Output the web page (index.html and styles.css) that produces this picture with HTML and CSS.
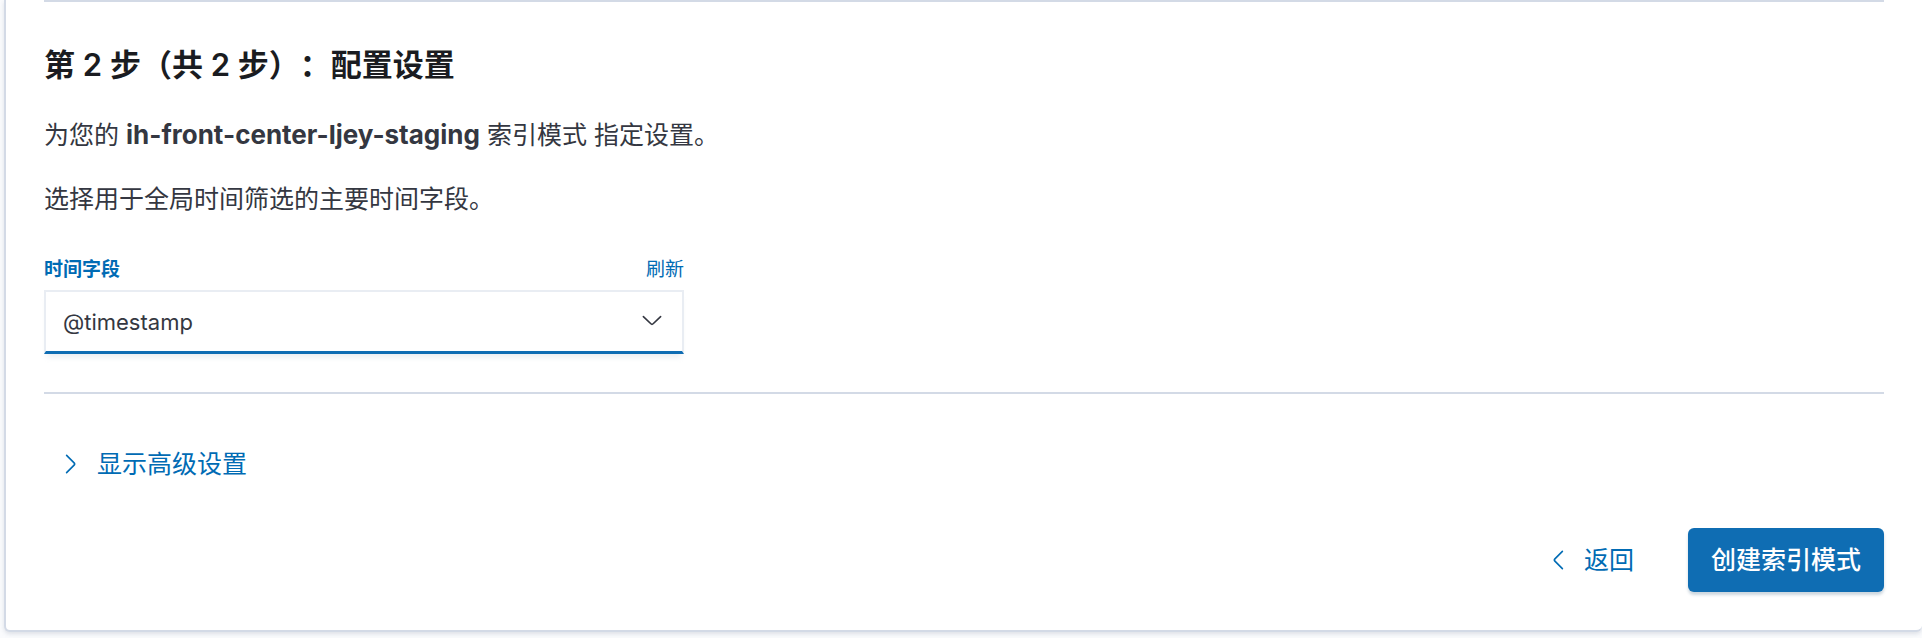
FILE: index.html
```html
<!DOCTYPE html>
<html lang="zh-CN">
<head>
<meta charset="utf-8">
<meta name="viewport" content="width=device-width, initial-scale=1">
<title>配置设置</title>
<link rel="stylesheet" href="styles.css">
</head>
<body>
<main class="panel">
  <hr class="rule">
  <h2 class="title">第 2 步（共 2 步）：配置设置</h2>
  <div class="intro">
    <p>为您的 <strong>ih-front-center-ljey-staging</strong> 索引模式 指定设置。</p>
    <p>选择用于全局时间筛选的主要时间字段。</p>
  </div>
  <div class="field">
    <div class="field-head">
      <label class="field-label" for="time-field">时间字段</label>
      <button class="refresh" type="button">刷新</button>
    </div>
    <div class="select-wrap">
      <select class="select" id="time-field">
        <option>@timestamp</option>
      </select>
      <svg class="select-arrow" width="26" height="26" viewBox="0 0 16 16" aria-hidden="true"><path d="M2.7 5.3 7.3 9.7Q8 10.4 8.7 9.7L13.3 5.3"/></svg>
    </div>
  </div>
  <hr class="rule">
  <button class="text-button advanced" type="button">
    <svg class="icon" width="26" height="26" viewBox="0 0 16 16" aria-hidden="true"><path d="M5.3 2.7 9.9 7.3Q10.6 8 9.9 8.7L5.3 13.3"/></svg>
    <span>显示高级设置</span>
  </button>
  <div class="actions">
    <button class="text-button" type="button">
      <svg class="icon" width="26" height="26" viewBox="0 0 16 16" aria-hidden="true"><path d="M10.7 2.7 6.1 7.3Q5.4 8 6.1 8.7L10.7 13.3"/></svg>
      <span>返回</span>
    </button>
    <button class="primary-button" type="button">创建索引模式</button>
  </div>
</main>
</body>
</html>
```
FILE: styles.css
```css
* {
  box-sizing: border-box;
}

body {
  margin: 0;
  padding: 0 0 6px 4px;
  background: #fafbfd;
  color: #343741;
  font-family: Inter, "Noto Sans CJK SC", sans-serif;
  font-size: 25px;
  line-height: 38px;
  text-spacing-trim: space-all;
}

button,
select {
  margin: 0;
  font: inherit;
}

button {
  border: 0;
  background: none;
  cursor: pointer;
}

.panel {
  padding: 0 38px 38px;
  border: 2px solid #d3dae6;
  border-top: 0;
  border-right: 0;
  border-radius: 0 0 6px 6px;
  background: #fff;
  box-shadow: 0 2px 4px rgba(152, 162, 179, 0.3);
}

.rule {
  height: 2px;
  margin: 0;
  border: 0;
  background: #d3dae6;
}

.title {
  margin: 38px 0 26px;
  color: #1a1c21;
  font-size: 31px;
  font-weight: 600;
  line-height: 50px;
}

.intro p {
  margin: 0 0 26px;
}

.intro strong {
  font-size: 26px;
  font-weight: 700;
}

.field {
  max-width: 640px;
  margin: 39px 0 38px;
}

.field-head {
  display: flex;
  justify-content: space-between;
  margin-bottom: 7px;
  color: #006bb4;
  font-size: 19px;
  line-height: 26px;
}

.field-label {
  font-weight: 600;
}

.refresh {
  padding: 0;
  color: inherit;
}

.select-wrap {
  position: relative;
}

.select {
  display: block;
  width: 100%;
  height: 64px;
  padding: 0 64px 0 17px;
  border: 2px solid #e9edf3;
  border-bottom: 3px solid #0f6db3;
  border-radius: 0;
  outline: 0;
  appearance: none;
  background: #fff;
  box-shadow: 0 6px 6px -3px rgba(152, 162, 179, 0.2);
  color: #343741;
  font-size: 22px;
}

.select-arrow {
  position: absolute;
  top: 18px;
  right: 19px;
  pointer-events: none;
}

.select-arrow path,
.icon path {
  fill: none;
  stroke: currentColor;
  stroke-linecap: round;
}

.text-button {
  display: flex;
  align-items: center;
  gap: 13px;
  height: 64px;
  padding: 0 14px;
  color: #006bb4;
}

.advanced {
  margin-top: 38px;
}

.actions {
  display: flex;
  justify-content: flex-end;
  gap: 40px;
  margin-top: 32px;
}

.primary-button {
  height: 64px;
  padding: 0 23px;
  border-radius: 6px;
  background: #0f6db3;
  box-shadow: 0 3px 3px rgba(54, 97, 126, 0.25);
  color: #fff;
  font-weight: 500;
}
```
